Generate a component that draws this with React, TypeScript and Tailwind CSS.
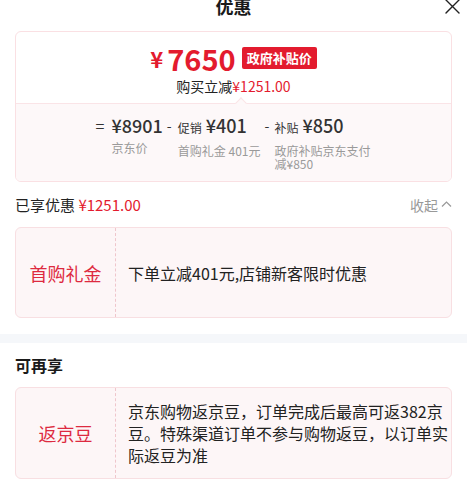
import React from "react";

function Coupon({ title, children }: { title: string; children: React.ReactNode }) {
  return (
    <div className="flex min-h-[91px] rounded-[6px] border border-[#f8dfe2] bg-[#fdf6f7]">
      <div className="flex w-[100px] shrink-0 items-center justify-center border-r border-dashed border-[#efc6cc] text-[18px] leading-[24px] text-[#dd2a40]">
        {title}
      </div>
      <div className="flex flex-1 items-center pl-3 pr-[1px] py-3 text-[16px] leading-[22px] text-[#222]">
        <div>{children}</div>
      </div>
    </div>
  );
}

export default function App() {
  return (
    <div className="relative h-[497px] w-[467px] overflow-hidden bg-white font-['Noto_Sans_CJK_SC',sans-serif] text-[#222]">
      {/* header */}
      <div className="relative h-[31px]">
        <div className="text-center text-[18px] font-bold leading-[12px] text-[#1a1a1a]">优惠</div>
        <svg
          className="absolute right-[6px] top-[-2px]"
          width="17"
          height="17"
          viewBox="0 0 17 17"
          fill="none"
          stroke="#222"
          strokeWidth="1.4"
          strokeLinecap="round"
        >
          <path d="M2 2 L15 15 M15 2 L2 15" />
        </svg>
      </div>

      <div className="px-[15px]">
        {/* summary card */}
        <div className="overflow-hidden rounded-[6px] border border-[#fae0e3]">
          <div className="flex h-[71px] flex-col items-center pt-[10px]">
            <div className="flex h-[32px] items-center">
              <span className="text-[22px] font-bold leading-[32px] text-[#e31b2e]">¥</span>
              <span className="ml-[4px] text-[29px] font-bold leading-[32px] text-[#e31b2e]">7650</span>
              <span className="ml-[6px] rounded-[2px] bg-[#e31b2e] px-[5px] text-[13px] font-bold leading-[22px] text-white">
                政府补贴价
              </span>
            </div>
            <div className="mt-[3px] text-[14px] leading-[18px] text-[#222]">
              购买立减<span className="text-[#e31b2e]">¥1251.00</span>
            </div>
          </div>
          <div className="relative h-px bg-[#fae4e7]">
            <div className="absolute left-[221px] top-[-4px] h-[8px] w-[8px] rotate-45 border-l border-t border-[#fae4e7] bg-[#fdf8f9]" />
          </div>
          <div className="flex h-[77px] justify-center gap-[4px] bg-[#fdf8f9] pt-[9px]">
            <div className="flex">
              <span className="w-[16px] text-[16px] leading-[24px] text-[#333]">=</span>
              <div className="flex flex-col">
                <span className="text-[18px] font-medium leading-[24px] text-[#333]">¥8901</span>
                <span className="mt-[4px] text-[12px] leading-[13px] text-[#9a9a9a]">京东价</span>
              </div>
            </div>
            <div className="flex">
              <span className="w-[11px] text-[14px] leading-[24px] text-[#333]">-</span>
              <div className="flex flex-col">
                <span className="leading-[24px] text-[#333]">
                  <span className="text-[12px]">促销</span>
                  <span className="ml-[4px] text-[18px] font-medium">¥401</span>
                </span>
                <span className="mt-[4px] text-[12px] leading-[13px] text-[#9a9a9a]">首购礼金 401元</span>
              </div>
            </div>
            <div className="flex">
              <span className="w-[10px] text-[14px] leading-[24px] text-[#333]">-</span>
              <div className="flex w-[97px] flex-col">
                <span className="leading-[24px] text-[#333]">
                  <span className="text-[12px]">补贴</span>
                  <span className="ml-[4px] text-[18px] font-medium">¥850</span>
                </span>
                <span className="mt-[4px] text-[12px] leading-[13px] text-[#9a9a9a]">政府补贴京东支付减¥850</span>
              </div>
            </div>
          </div>
        </div>

        {/* enjoyed row */}
        <div className="flex h-[45px] items-center justify-between">
          <div className="text-[15px] leading-[22px]">
            已享优惠 <span className="text-[#e31b2e]">¥1251.00</span>
          </div>
          <div className="flex items-center text-[14px] leading-[20px] text-[#999]">
            收起
            <svg className="ml-[3px]" width="11" height="11" viewBox="0 0 11 11" fill="none" stroke="#999" strokeWidth="1.2">
              <path d="M1 7.5 L5.5 3 L10 7.5" />
            </svg>
          </div>
        </div>

        <Coupon title="首购礼金">下单立减401元,店铺新客限时优惠</Coupon>
      </div>

      <div className="mt-[16px] h-[9px] bg-[#f5f7fa]" />

      <div className="px-[15px]">
        <div className="flex h-[44px] items-center text-[16px] font-bold text-[#1a1a1a]">可再享</div>
        <Coupon title="返京豆">
          京东购物返京豆，订单完成后最高可返382京豆。特殊渠道订单不参与购物返豆，以订单实际返豆为准
        </Coupon>
      </div>
    </div>
  );
}
